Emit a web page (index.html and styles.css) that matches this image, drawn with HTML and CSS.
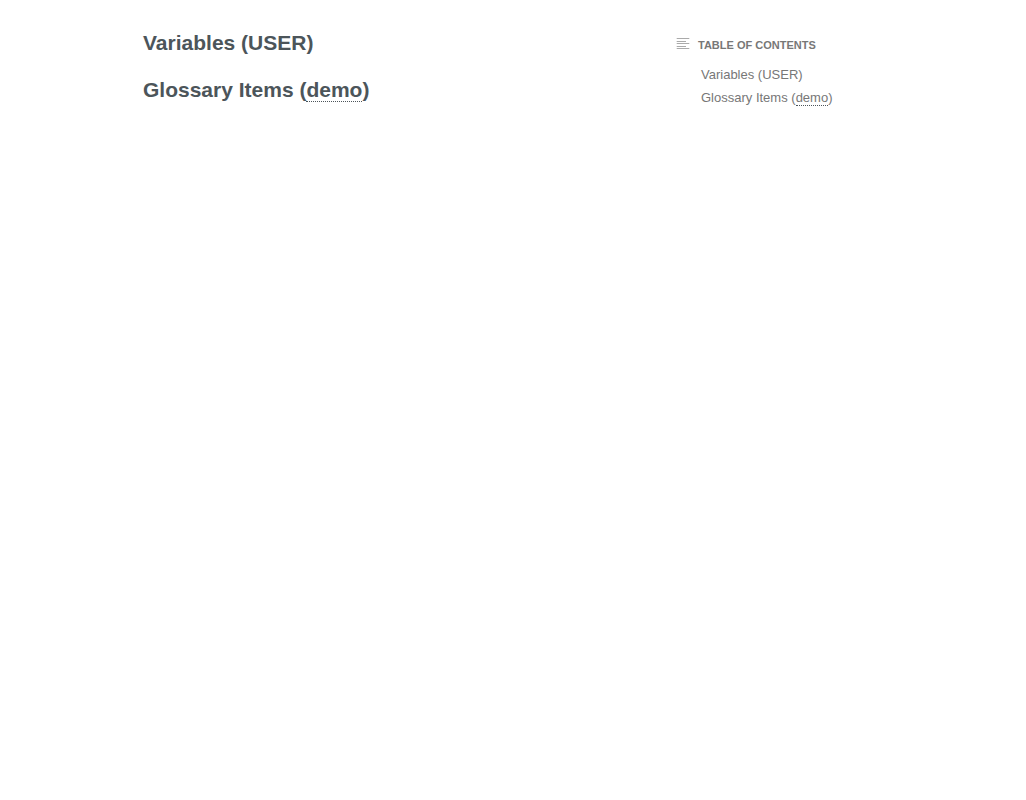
FILE: index.html
```html
<!DOCTYPE html>
<html lang="en">
<head>
<meta charset="utf-8">
<meta name="viewport" content="width=device-width, initial-scale=1">
<title>Variables and glossary</title>
<link rel="stylesheet" href="styles.css">
</head>
<body>
<div class="page">
  <main class="content">
    <h2 class="heading" id="variables">Variables (USER)</h2>
    <h2 class="heading" id="glossary">Glossary Items (<span class="term">demo</span>)</h2>
  </main>
  <nav class="toc" aria-labelledby="toc-title">
    <div class="toc-header">
      <svg class="toc-icon" width="15" height="12" viewBox="0 0 15 12" aria-hidden="true">
        <path d="M1.7 .5h12.6M1.7 3.5h9.3M1.7 5.5h12.6M1.7 8.5h9.3M1.7 10.5h12.6" fill="none" stroke="currentColor"/>
      </svg>
      <h2 class="toc-title" id="toc-title">TABLE OF CONTENTS</h2>
    </div>
    <ul class="toc-list">
      <li><a class="toc-link" href="#variables">Variables (USER)</a></li>
      <li><a class="toc-link" href="#glossary">Glossary Items (<span class="term">demo</span>)</a></li>
    </ul>
  </nav>
</div>
</body>
</html>
```
FILE: styles.css
```css
body {
  margin: 0;
  background: #fff;
  font-family: "Liberation Sans", Arial, sans-serif;
  color: #4c555a;
}

.page {
  display: grid;
  grid-template-columns: minmax(0, 1fr) 208px;
  gap: 24px;
  max-width: 740px;
  margin: 0 auto;
  padding-top: 31px;
}

.content {
  display: flex;
  flex-direction: column;
  gap: 23px;
}

.heading {
  margin: 0;
  font-size: 21px;
  line-height: 24px;
}

.term {
  border-bottom: 1px dotted #4c555a;
}

.toc {
  padding-top: 7px;
  color: #777;
}

.toc-header {
  display: flex;
  gap: 8px;
}

.toc-icon {
  color: #aaa;
}

.toc-title {
  margin: 0;
  font-size: 11px;
  line-height: 14px;
}

.toc-list {
  margin: 0;
  padding: 11px 0 0 26px;
  list-style: none;
  font-size: 13px;
  line-height: 23px;
}

.toc-link {
  color: inherit;
  text-decoration: none;
}
```
